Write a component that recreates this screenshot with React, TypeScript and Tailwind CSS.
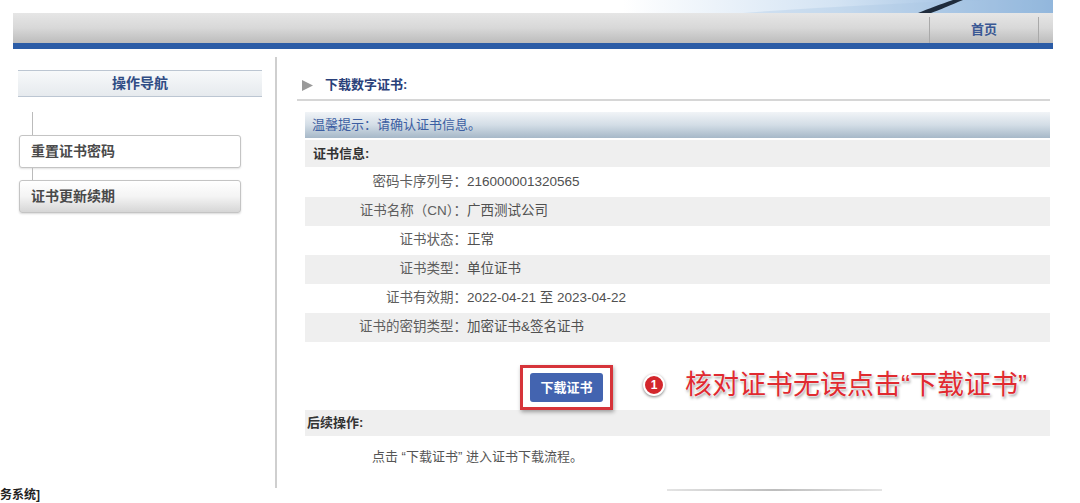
import React from "react";

const rows = [
  { label: "密码卡序列号：", value: "216000001320565", gray: false },
  { label: "证书名称（CN）：", value: "广西测试公司", gray: true },
  { label: "证书状态：", value: "正常", gray: false },
  { label: "证书类型：", value: "单位证书", gray: true },
  { label: "证书有效期：", value: "2022-04-21 至 2023-04-22", gray: false },
  { label: "证书的密钥类型：", value: "加密证书&签名证书", gray: true },
];

function Banner() {
  return (
    <div className="ml-auto h-[13px] w-[430px] overflow-hidden bg-gradient-to-r from-white via-[#d3e3f3] to-[#86afd9]">
      <svg width="430" height="13" viewBox="0 0 430 13">
        <path d="M120 13 C200 7 280 3 360 0 L430 0 L430 13 Z" fill="#a9c6e3" opacity="0.35" />
        <path d="M295 13 C305 9 318 4 330 0 L340 0 C328 5 316 10 308 13 Z" fill="#1f2c3d" />
      </svg>
    </div>
  );
}

export default function App() {
  return (
    <div className="relative h-[503px] w-[1080px] overflow-hidden bg-white font-['Liberation_Sans','Noto_Sans_CJK_SC',sans-serif] text-[#555]">
      {/* top banner + nav */}
      <div className="pl-[13px] pr-[27px]">
        <div className="flex">
          <Banner />
        </div>
        <div className="flex h-[30px] justify-end bg-gradient-to-b from-[#e6e6e6] via-[#d8d8d8] to-[#bcbcbc] pr-[14px]">
          <div className="mt-[4px] flex w-[110px] items-center justify-center border-x border-[#a9a9a9] text-[13px] font-bold text-[#3a5894]">
            首页
          </div>
        </div>
        <div className="h-[6px] bg-[#2b5ca6]" />
      </div>

      {/* body */}
      <div className="flex h-[439px] pl-[18px]">
        {/* left nav */}
        <div className="mt-[21px] w-[244px]">
          <div className="flex h-[27px] items-center justify-center border-y border-[#bcc6d2] bg-gradient-to-b from-[#f7f9fa] to-[#e6eaee] text-[14px] font-bold text-[#2f4c84]">
            操作导航
          </div>
          <div className="mt-[15px] pl-[1px]">
            <div className="ml-[13px] h-[23px] w-px bg-[#bbbbbb]" />
            <div className="flex h-[33px] w-[222px] items-center rounded-[3px] border border-[#c4c4c4] bg-white pl-[11px] text-[14px] font-bold text-[#4a4a4a] shadow-[0_1px_2px_rgba(0,0,0,0.12)]">
              重置证书密码
            </div>
            <div className="ml-[13px] h-[12px] w-px bg-[#bbbbbb]" />
            <div className="flex h-[33px] w-[222px] items-center rounded-[3px] border border-[#c4c4c4] bg-gradient-to-b from-white via-[#f4f4f4] to-[#d6d6d6] pl-[11px] text-[14px] font-bold text-[#4a4a4a] shadow-[0_1px_2px_rgba(0,0,0,0.15)]">
              证书更新续期
            </div>
          </div>
        </div>

        {/* divider */}
        <div className="ml-[13px] mt-[8px] h-[431px] w-[2px] bg-[#cfcfcf]" />

        {/* main */}
        <div className="w-[773px] pl-[28px]">
          <div className="mt-[26px] flex h-[20px] items-center">
            <svg width="11" height="11" viewBox="0 0 11 11" className="-ml-[3px]">
              <path d="M0 0 L11 5.5 L0 11 Z" fill="#9a9a9a" />
            </svg>
            <span className="ml-[12px] text-[13px] font-bold text-[#2a4079]">下载数字证书:</span>
          </div>
          <div className="-ml-[8px] mt-[4px] h-[2px] bg-[#d6d6d6]" />

          <div className="mt-[11px] flex h-[26px] items-center bg-gradient-to-b from-[#f1f4f7] via-[#d3dde6] to-[#a6b8c8] pl-[7px] text-[13px] text-[#3c5ea2]">
            温馨提示：请确认证书信息。
          </div>
          <div className="mt-[2px] flex h-[27px] items-center bg-[#efefef] pl-[8px] text-[13px] font-bold text-[#333]">
            证书信息:
          </div>
          <div className="mt-[1px]">
            {rows.map((r) => (
              <div
                key={r.label}
                className={`flex h-[29px] items-center text-[13.5px] ${r.gray ? "bg-[#efefef]" : "bg-white"}`}
              >
                <div className="w-[162px] text-right text-[#5e5e5e]">{r.label}</div>
                <div className="text-[#505050]">{r.value}</div>
              </div>
            ))}
          </div>

          {/* action */}
          <div className="flex h-[68px] items-start pl-[215px] pt-[23px]">
            <div className="border-[3px] border-[#d6343a] px-[7px] py-[5px] shadow-[1px_2px_4px_rgba(0,0,0,0.35)]">
              <button className="flex h-[29px] w-[73px] items-center justify-center rounded-[3px] bg-[#4364b0] text-[13px] font-bold text-white">
                下载证书
              </button>
            </div>
            <div className="ml-[30px] mt-[5px] flex items-center">
              <div className="flex h-[22px] w-[22px] items-center justify-center rounded-full border-2 border-white bg-[#d3262c] text-[12px] font-bold text-white shadow-[0_1px_3px_rgba(0,0,0,0.5)]">
                1
              </div>
              <div className="ml-[20px] text-[27px] leading-[30px] text-[#e02a30] [text-shadow:0_0_2px_#fff,0_0_2px_#fff,1px_2px_3px_rgba(0,0,0,0.45)]">
                核对证书无误点击“下载证书”
              </div>
            </div>
          </div>

          <div className="flex h-[26px] items-center bg-[#efefef] pl-[2px] text-[13px] font-bold text-[#333]">
            后续操作:
          </div>
          <div className="mt-[11px] pl-[67px] text-[13px] leading-[20px] text-[#555]">
            点击 “下载证书” 进入证书下载流程。
          </div>
          <div className="ml-[362px] mt-[22px] h-[2px] w-[215px] bg-gradient-to-r from-[#e4e4e4] via-[#bdbdbd] to-[#e4e4e4]" />
        </div>
      </div>

      {/* footer */}
      <div className="text-[12px] font-bold leading-[14px] text-[#222]">务系统]</div>
    </div>
  );
}
